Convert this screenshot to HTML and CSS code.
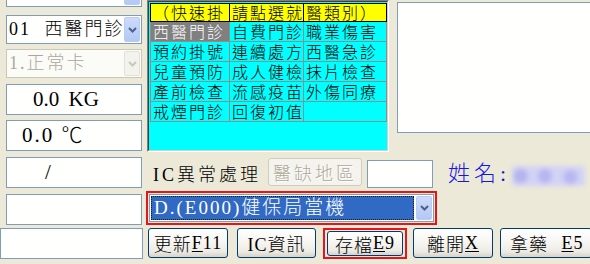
FILE: index.html
```html
<!DOCTYPE html>
<html lang="zh-Hant">
<head>
<meta charset="utf-8">
<title>掛號</title>
<link rel="stylesheet" href="styles.css">
</head>
<body>
<div class="app">
  <aside class="left">
    <div class="box combo combo-top">
      <span class="val"></span>
      <span class="drop"><svg width="9" height="6" viewBox="0 0 9 6"><path d="M1 1 L4.5 4.5 L8 1" stroke="#4D6185" stroke-width="2" fill="none"/></svg></span>
    </div>
    <div class="box combo combo-dept">
      <span class="val">01 西醫門診</span>
      <span class="drop"><svg width="9" height="6" viewBox="0 0 9 6"><path d="M1 1 L4.5 4.5 L8 1" stroke="#4D6185" stroke-width="2" fill="none"/></svg></span>
    </div>
    <div class="box combo disabled">
      <span class="val">1.正常卡</span>
      <span class="drop"><svg width="9" height="6" viewBox="0 0 9 6"><path d="M1 1 L4.5 4.5 L8 1" stroke="#C9C7BA" stroke-width="2" fill="none"/></svg></span>
    </div>
    <div class="box field kg">0.0 KG</div>
    <div class="box field temp">0.0 ℃</div>
    <div class="box field bp">/</div>
    <div class="box field blank"></div>
    <div class="box field wide"></div>
  </aside>

  <main class="main">
    <section class="top">
      <div class="panel">
        <div class="panel-in">
          <table class="quick">
            <colgroup><col class="c1"><col class="c2"><col class="c3"></colgroup>
            <tr><th>（快速掛</th><th>請點選就</th><th>醫類別）</th></tr>
            <tr><td class="sel">西醫門診</td><td>自費門診</td><td>職業傷害</td></tr>
            <tr><td>預約掛號</td><td>連續處方</td><td>西醫急診</td></tr>
            <tr><td>兒童預防</td><td>成人健檢</td><td>抹片檢查</td></tr>
            <tr><td>產前檢查</td><td>流感疫苗</td><td>外傷同療</td></tr>
            <tr><td>戒煙門診</td><td>回復初值</td><td></td></tr>
          </table>
        </div>
      </div>
      <div class="memo"></div>
    </section>

    <div class="ic-row">
      <span class="ic-label">IC異常處理</span>
      <span class="btn btn-area" aria-disabled="true">醫缺地區</span>
      <span class="textbox"></span>
      <span class="name-label">姓名:</span>
      <span class="name-blur"></span>
    </div>

    <div class="combo-row">
      <div class="sel-box">
        <span class="sel-val">D.(E000)健保局當機</span>
        <span class="drop"><svg width="9" height="6" viewBox="0 0 9 6"><path d="M1 1 L4.5 4.5 L8 1" stroke="#4D6185" stroke-width="2" fill="none"/></svg></span>
      </div>
    </div>

    <div class="btn-row">
      <span class="btn b1">更新<u>F</u>11</span>
      <span class="btn b2">IC資訊</span>
      <span class="save-wrap"><span class="btn b3">存檔<u>E</u>9</span></span>
      <span class="btn b4">離開<u>X</u></span>
      <span class="btn b5">拿藥 <u>E</u>5</span>
    </div>
  </main>
</div>
</body>
</html>
```

FILE: styles.css
```css
* { box-sizing: border-box; }

html, body {
  margin: 0;
  padding: 0;
}

body {
  width: 590px;
  height: 264px;
  overflow: hidden;
  background: #ECE9D8;
  color: #000;
  font-family: "Liberation Serif", "Noto Sans CJK TC", serif;
  font-weight: 300;
}

.app {
  display: flex;
  height: 264px;
}

/* ---------- left column ---------- */
.left {
  width: 146px;
  flex: none;
  display: flex;
  flex-direction: column;
  gap: 5px;
}

.box {
  flex: none;
  margin-left: 6px;
  width: 136px;
  height: 31px;
  border: 1px solid #7F9DB9;
  background: #FFFFFE;
}

.combo {
  display: flex;
  height: 29px;
  padding: 1px;
}

.combo-top {
  margin-top: -22px;
}

.combo-dept {
  margin-top: 3px;
}

.combo .val {
  flex: 1;
  min-width: 0;
  overflow: hidden;
  white-space: nowrap;
  font-size: 18px;
  line-height: 25px;
  padding-left: 1px;
  letter-spacing: 2px;
  word-spacing: 7px;
}

.drop {
  flex: none;
  width: 16px;
  display: flex;
  align-items: center;
  justify-content: center;
  background: linear-gradient(#CCDBFC, #B3C8F5);
  border: 1px solid #BACCF4;
  border-radius: 2px;
}

.combo.disabled {
  border-color: #C9C7BA;
  background: #FBFBF8;
}

.combo.disabled .val {
  color: #ACA899;
}

.combo.disabled .drop {
  background: #F3F3EE;
  border-color: #E4E2D8;
}

.field {
  font-size: 21px;
  line-height: 29px;
  white-space: pre;
}

.kg {
  margin-top: 1px;
  padding-left: 26px;
  word-spacing: 4px;
}

.temp {
  padding-left: 15px;
  letter-spacing: 2px;
}

.bp {
  margin-top: 1px;
  padding-left: 38px;
}

.blank {
  margin-top: 1px;
}

.wide {
  margin-top: -2px;
  margin-left: 0;
  width: 143px;
}

/* ---------- main ---------- */
.main {
  flex: 1;
  min-width: 0;
  display: flex;
  flex-direction: column;
}

.top {
  display: flex;
  align-items: flex-start;
  height: 152px;
}

.panel {
  flex: none;
  margin-left: 1px;
  width: 242px;
  height: 152px;
  border: 1px solid;
  border-color: #808080 #FFFFFF #FFFFFF #808080;
}

.panel-in {
  height: 100%;
  border: 1px solid;
  border-color: #404040 #D4D0C8 #D4D0C8 #404040;
  background: #00FFFF;
  padding: 1px 0 0 1px;
}

.quick {
  border-collapse: collapse;
  table-layout: fixed;
  width: 236px;
}

.quick .c1 { width: 79px; }
.quick .c2 { width: 74px; }
.quick .c3 { width: 83px; }

.quick th,
.quick td {
  padding: 0 0 0 2px;
  font-family: "Noto Sans CJK TC", sans-serif;
  font-weight: 300;
  font-size: 16px;
  letter-spacing: 2px;
  white-space: nowrap;
  text-align: left;
  vertical-align: middle;
}

.quick th {
  height: 18px;
  line-height: 17px;
  background: #FFFF00;
  border: 1px solid #000;
}

.quick td {
  height: 20px;
  line-height: 19px;
  border: 1px solid #8E8E8E;
}

.quick td.sel {
  background: #808080;
  color: #FFFFFF;
}

.memo {
  flex: 1;
  margin-left: 8px;
  margin-top: 2px;
  margin-right: -2px;
  height: 131px;
  border: 1px solid #7F9DB9;
  background: #FFFFFE;
}

/* ---------- IC row ---------- */
.ic-row {
  display: flex;
  align-items: flex-start;
  margin-top: 6px;
  height: 30px;
}

.ic-label {
  flex: none;
  margin-left: 7px;
  margin-top: 6px;
  width: 115px;
  font-size: 18px;
  line-height: 22px;
  letter-spacing: 3px;
  white-space: nowrap;
}

.btn {
  flex: none;
  display: flex;
  align-items: center;
  justify-content: center;
  height: 30px;
  border: 1px solid #003C74;
  border-radius: 3px;
  background: linear-gradient(#FFFFFF 0%, #F7F6F2 45%, #ECEBE5 80%, #D8D3C8 100%);
  font-size: 18px;
  letter-spacing: 1px;
  white-space: pre;
}

.btn u {
  text-underline-offset: 2px;
}

.btn-area {
  width: 94px;
  height: 28px;
  border-color: #CFCDC0;
  background: #F4F3EE;
  color: #ACA899;
  text-shadow: 1px 1px 0 #FFFFFF;
  letter-spacing: 3px;
}

.textbox {
  flex: none;
  margin-left: 5px;
  margin-top: 2px;
  width: 66px;
  height: 28px;
  border: 1px solid #7F9DB9;
  background: #FFFFFE;
}

.name-label {
  flex: none;
  margin-left: 15px;
  margin-top: 2px;
  font-size: 22px;
  line-height: 28px;
  letter-spacing: 4px;
  color: #1414E6;
}

.name-blur {
  flex: none;
  margin-left: 2px;
  margin-top: 8px;
  width: 73px;
  height: 20px;
  background:
    radial-gradient(circle at 12% 50%, #B4B4EE 0 5px, transparent 9px),
    radial-gradient(circle at 45% 50%, #B6B6F0 0 5px, transparent 9px),
    radial-gradient(circle at 80% 55%, #B8B8F0 0 5px, transparent 9px),
    #D3D3F6;
  filter: blur(2px);
  border-radius: 4px;
}

/* ---------- combo row ---------- */
.combo-row {
  flex: none;
  margin-top: 3px;
  width: 291px;
  height: 34px;
  border: 2px solid #E8141B;
  padding: 1px;
}

.sel-box {
  display: flex;
  height: 100%;
  border: 1px solid #7F9DB9;
  background: #FFFFFE;
  padding: 1px;
  gap: 2px;
}

.sel-val {
  flex: 1;
  min-width: 0;
  background: #316AC5;
  color: #FFFFFF;
  border: 1px dotted #1A1A1A;
  font-size: 19px;
  line-height: 22px;
  letter-spacing: 2px;
  padding-left: 2px;
  white-space: nowrap;
  overflow: hidden;
}

/* ---------- buttons ---------- */
.btn-row {
  display: flex;
  align-items: flex-start;
  margin-top: 3px;
}

.b1 {
  margin-left: 2px;
  width: 80px;
}

.b2 {
  margin-left: 9px;
  width: 79px;
}

.save-wrap {
  flex: none;
  margin-left: 7px;
  width: 84px;
  height: 31px;
  border: 2px solid #E8141B;
  padding: 1px 2px;
}

.b3 {
  width: 100%;
  height: 25px;
}

.b4 {
  margin-left: 6px;
  width: 80px;
}

.b5 {
  margin-left: 7px;
  width: 92px;
  justify-content: flex-start;
  padding-left: 9px;
  word-spacing: 8px;
}
```
